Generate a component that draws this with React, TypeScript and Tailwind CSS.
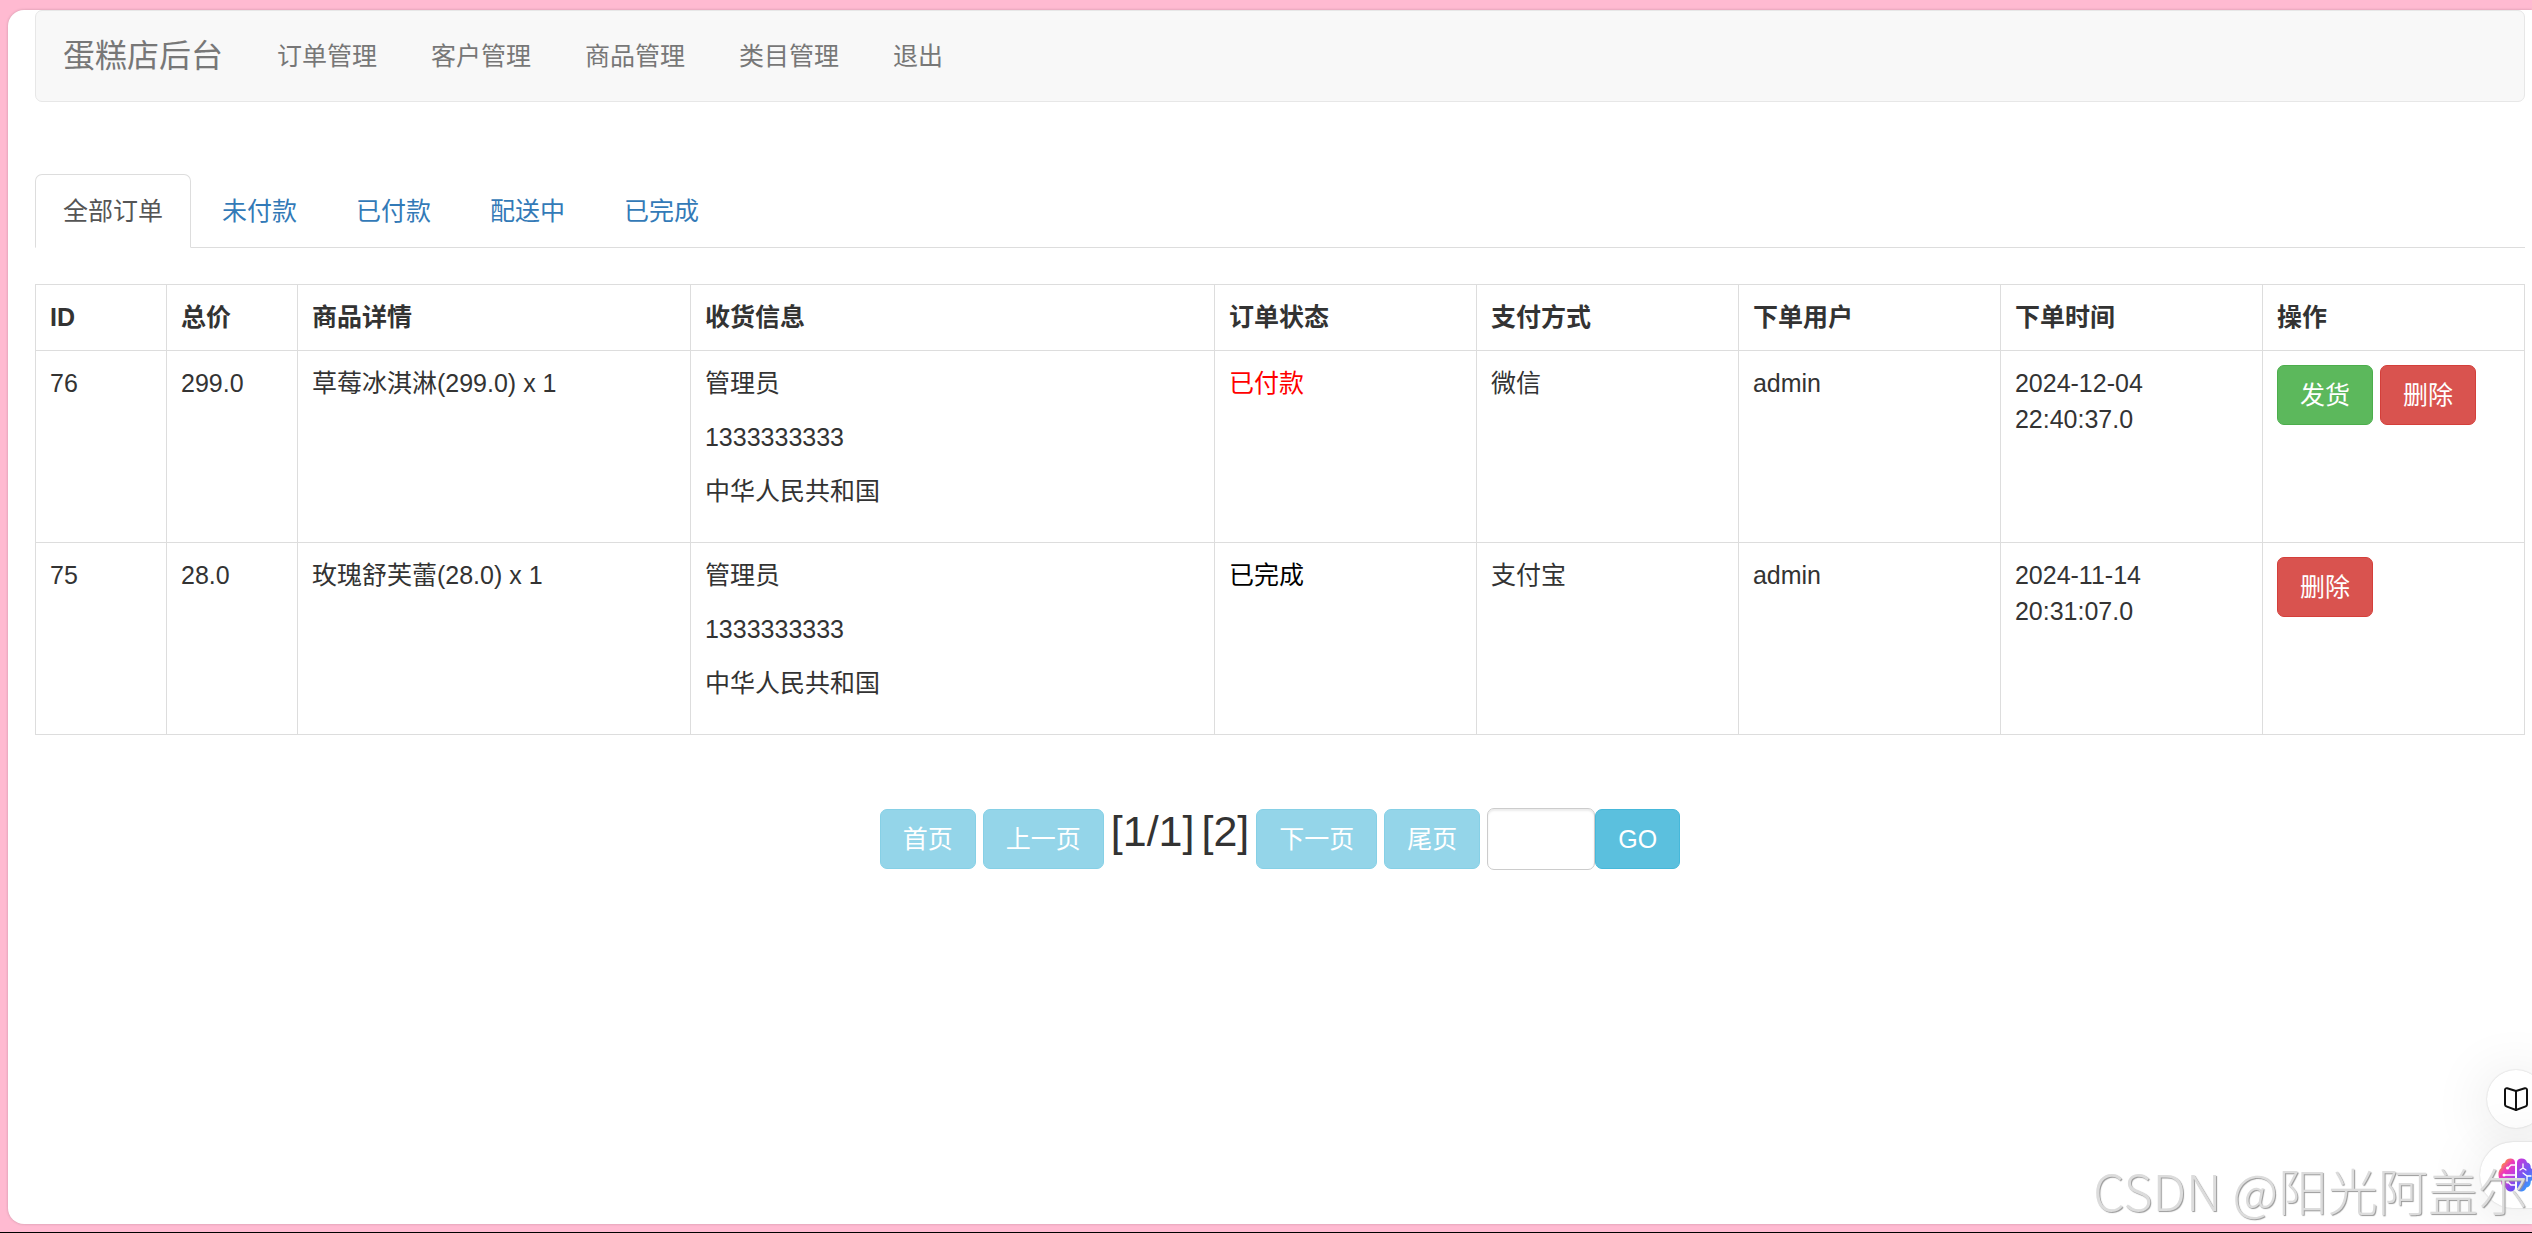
import type { ReactNode } from "react";
import { clsx } from "clsx";

interface Order {
  id: number;
  total: string;
  goods: string;
  receiver: string[];
  status: string;
  paid: boolean;
  payType: string;
  user: string;
  date: string;
  time: string;
}

const navItems = ["订单管理", "客户管理", "商品管理", "类目管理", "退出"];

const tabs = ["全部订单", "未付款", "已付款", "配送中", "已完成"];

const columns = [
  { title: "ID", width: "w-[5%]" },
  { title: "总价", width: "w-[5%]" },
  { title: "商品详情", width: "w-[15%]" },
  { title: "收货信息", width: "w-[20%]" },
  { title: "订单状态", width: "w-[10%]" },
  { title: "支付方式", width: "w-[10%]" },
  { title: "下单用户", width: "w-[10%]" },
  { title: "下单时间", width: "w-[10%]" },
  { title: "操作", width: "w-[10%]" },
];

const orders: Order[] = [
  {
    id: 76,
    total: "299.0",
    goods: "草莓冰淇淋(299.0) x 1",
    receiver: ["管理员", "1333333333", "中华人民共和国"],
    status: "已付款",
    paid: true,
    payType: "微信",
    user: "admin",
    date: "2024-12-04",
    time: "22:40:37.0",
  },
  {
    id: 75,
    total: "28.0",
    goods: "玫瑰舒芙蕾(28.0) x 1",
    receiver: ["管理员", "1333333333", "中华人民共和国"],
    status: "已完成",
    paid: false,
    payType: "支付宝",
    user: "admin",
    date: "2024-11-14",
    time: "20:31:07.0",
  },
];

const variants = {
  success: "border-[#4cae4c] bg-[#5cb85c]",
  danger: "border-[#d43f3a] bg-[#d9534f]",
  info: "border-[#46b8da] bg-[#5bc0de]",
};

interface ButtonProps {
  children: ReactNode;
  variant: keyof typeof variants;
  disabled?: boolean;
}

function Button({ children, variant, disabled }: ButtonProps) {
  return (
    <button
      type="button"
      disabled={disabled}
      className={clsx(
        "h-[60px] rounded-[7px] border px-[22px] whitespace-nowrap text-white disabled:opacity-65",
        variants[variant]
      )}
    >
      {children}
    </button>
  );
}

function Navbar() {
  return (
    <nav className="flex h-[92px] items-center rounded-[7px] border border-[#e7e7e7] bg-[#f8f8f8] text-[#777]">
      <a href="#" className="px-[27px] text-[32px]">
        蛋糕店后台
      </a>
      <ul className="flex">
        {navItems.map((item) => (
          <li key={item}>
            <a href="#" className="block px-[27px]">
              {item}
            </a>
          </li>
        ))}
      </ul>
    </nav>
  );
}

function StatusTabs() {
  return (
    <ul className="mt-[72px] flex gap-[3px] border-b border-[#ddd]">
      {tabs.map((tab, i) => (
        <li key={tab} className="-mb-px">
          <a
            href="#"
            className={clsx(
              "block rounded-t-[7px] border px-[27px] py-[18px]",
              i === 0
                ? "border-[#ddd] border-b-white bg-white text-[#555]"
                : "border-transparent text-[#337ab7]"
            )}
          >
            {tab}
          </a>
        </li>
      ))}
    </ul>
  );
}

function OrderTable() {
  return (
    <table className="mt-9 w-full table-fixed border-collapse [&_td]:border [&_td]:border-[#ddd] [&_td]:px-3.5 [&_td]:pt-3.5 [&_td]:pb-[15px] [&_td]:align-top">
      <thead>
        <tr>
          {columns.map((col) => (
            <th
              key={col.title}
              className={clsx("border border-[#ddd] px-3.5 pt-3.5 pb-[15px] text-left font-bold", col.width)}
            >
              {col.title}
            </th>
          ))}
        </tr>
      </thead>
      <tbody>
        {orders.map((order) => (
          <tr key={order.id}>
            <td>{order.id}</td>
            <td>{order.total}</td>
            <td>{order.goods}</td>
            <td>
              {order.receiver.map((line) => (
                <p key={line} className="mb-[18px]">
                  {line}
                </p>
              ))}
            </td>
            <td className={order.paid ? "text-[#f00]" : "text-black"}>{order.status}</td>
            <td>{order.payType}</td>
            <td>{order.user}</td>
            <td>
              {order.date}
              <br />
              {order.time}
            </td>
            <td>
              <div className="flex gap-[7px]">
                {order.paid && <Button variant="success">发货</Button>}
                <Button variant="danger">删除</Button>
              </div>
            </td>
          </tr>
        ))}
      </tbody>
    </table>
  );
}

function Pagination() {
  return (
    <div className="mt-[73px] flex items-center justify-center gap-[7px]">
      <Button variant="info" disabled>首页</Button>
      <Button variant="info" disabled>上一页</Button>
      <h2 className="flex gap-[7px] self-start text-[43px] leading-[47px] font-medium">
        <span>[1/1]</span>
        <span>[2]</span>
      </h2>
      <Button variant="info" disabled>下一页</Button>
      <Button variant="info" disabled>尾页</Button>
      <div className="flex items-center">
        <input
          type="text"
          aria-label="页码"
          className="h-[62px] w-[108px] rounded-[7px] border border-[#ccc] bg-white px-5 shadow-[inset_0_2px_2px_rgba(0,0,0,0.08)]"
        />
        <Button variant="info">GO</Button>
      </div>
    </div>
  );
}

function BookIcon() {
  return (
    <svg viewBox="0 0 24 24" className="size-6" fill="none" stroke="#111" strokeWidth="2" strokeLinejoin="round" strokeLinecap="round">
      <path d="M12 4 3.2 1.3C2 1 1 1.6 1 2.8V17.6c0 .9.5 1.5 1.3 1.8L12 23l9.7-3.6c.8-.3 1.3-.9 1.3-1.8V2.8c0-1.200-1-1.8-2.2-1.5L12 4Z" />
      <path d="M12 4v19" />
    </svg>
  );
}

function BrainIcon() {
  return (
    <svg viewBox="0 0 36 34" className="h-[34px] w-9">
      <defs>
        <linearGradient id="brainLeft" x1="0.1" y1="0" x2="0.7" y2="1">
          <stop offset="0.1" stopColor="#ffa32e" />
          <stop offset="0.4" stopColor="#f038b8" />
          <stop offset="0.7" stopColor="#c13ee0" />
          <stop offset="1" stopColor="#6d4bf0" />
        </linearGradient>
        <linearGradient id="brainRight" x1="0.2" y1="0" x2="0.8" y2="1">
          <stop offset="0" stopColor="#c738dc" />
          <stop offset="0.5" stopColor="#6a5cf5" />
          <stop offset="1" stopColor="#22b4ff" />
        </linearGradient>
      </defs>
      <path fill="url(#brainLeft)" d="M17 4.5C17 2 15 .5 12.500.5 9.500.5 7.5 2 7 4.5 4.5 5 3 7 3.3 10 1.2 11.5.3 14 .5 17c.1 3 1 5 2.8 6.500C3 27 5 29 7.5 29.5 8.5 32 10.3 33.5 12.8 33.5 15.3 33.5 17 32 17 29.5Z" />
      <path fill="url(#brainRight)" d="M19 4.500C19 2 21 .5 23.500.5c3 0 5 1.5 5.5 4 2.5.5 4 2.5 3.7 5.5 2.100 1.5 3 4 2.8 7-.1 3-1 5-2.8 6.500.3 3.5-1.7 5.500-4.2 6-1 2.5-2.8 4-5.3 4C20.7 33.5 19 32 19 29.5Z" />
      <g fill="none" stroke="#fff" strokeWidth="1.3" strokeLinecap="round">
        <path d="M17 7h-4l-3 3M6 17h11M17 27h-4l-3-3" />
        <path d="M25 6v4l-3 2M25 10l3 2M25 15l4 3h4M29 18v5" />
      </g>
      <g fill="#fff">
        <circle cx="9.5" cy="10" r="1.5" />
        <circle cx="6" cy="17" r="1.5" />
        <circle cx="9.5" cy="24" r="1.5" />
      </g>
    </svg>
  );
}

// Browser assistant buttons, half tucked behind the right edge
function FloatingTools() {
  return (
    <div className="fixed right-0 bottom-[9px] h-[210px] w-[100px] overflow-hidden">
      <div className="ml-12 flex w-[72px] flex-col items-center gap-3.5 pt-14">
        <button
          type="button"
          aria-label="阅读"
          className="flex size-[58px] items-center justify-center rounded-full bg-white shadow-[0_0_2px_rgba(0,0,0,0.2),0_6px_60px_rgba(0,0,0,0.12)]"
        >
          <BookIcon />
        </button>
        <button
          type="button"
          aria-label="助手"
          className="flex h-[66px] w-[72px] shrink-0 items-center justify-center rounded-l-full bg-white shadow-[0_0_2px_rgba(0,0,0,0.2),0_6px_60px_rgba(0,0,0,0.1)]"
        >
          <BrainIcon />
        </button>
      </div>
    </div>
  );
}

export default function App() {
  return (
    <div className="flex min-h-screen flex-col overflow-hidden border-b border-black bg-[#ffbad1] pt-2.5 pb-2 pl-2 font-['Liberation_Sans','Noto_Sans_CJK_SC',sans-serif] text-[25px] leading-9 text-[#333]">
      <main className="flex-1 rounded-l-2xl bg-white pr-[7px] pl-[27px] shadow-[0_0_3px_rgba(0,0,0,0.2)]">
        <Navbar />
        <StatusTabs />
        <OrderTable />
        <Pagination />
      </main>
      <FloatingTools />
      <div className="pointer-events-none fixed right-1 bottom-2 font-['Noto_Sans_CJK_SC',sans-serif] text-[50px] leading-[72px] font-light whitespace-nowrap text-[#dcdcdc] [text-shadow:1px_1px_1px_#999]">
        CSDN @阳光阿盖尔
      </div>
    </div>
  );
}
